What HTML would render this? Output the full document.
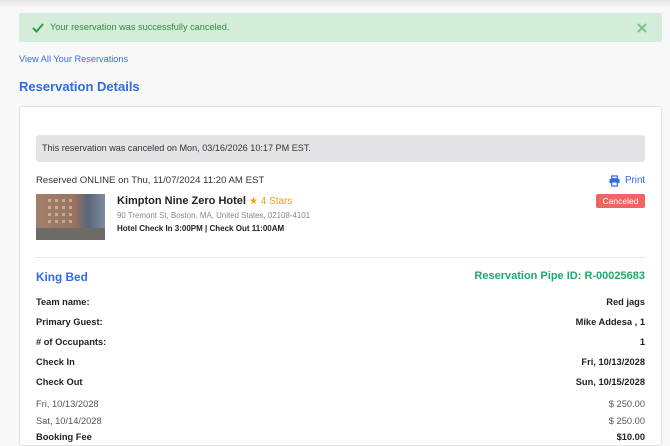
<!DOCTYPE html>
<html><head><meta charset="utf-8"><style>
*{margin:0;padding:0;box-sizing:border-box}
body{width:670px;height:436px;overflow:hidden;background:#f8f8f8;font-family:"Liberation Sans",sans-serif;position:relative;color:#222}
.a{position:absolute}
.topsh{left:0;top:0;width:670px;height:8px;background:linear-gradient(#e6e6e6,#f8f8f8)}
.alert{left:19px;top:13px;width:643px;height:29px;background:#d4edda;border-radius:2px;color:#2f8a3f;font-size:9.2px;line-height:29px;padding-left:31px}
.card{left:19px;top:106px;width:643px;height:340px;background:#fff;border:1px solid #e3e3e3;border-radius:3px}
.row{left:36px;width:609px;font-size:9.3px;display:flex;justify-content:space-between;line-height:14px}
</style></head><body>
<div class="a topsh"></div>
<div class="a alert">Your reservation was successfully canceled.</div>
<svg class="a" style="left:32px;top:22px" width="12" height="11" viewBox="0 0 12 11"><path d="M1 6l3.5 3.5L11 2" stroke="#2f9a45" stroke-width="2" fill="none"/></svg>
<svg class="a" style="left:637px;top:23px" width="10" height="10" viewBox="0 0 10 10"><path d="M1 1l8 8M9 1l-8 8" stroke="#7cc08c" stroke-width="2"/></svg>
<div class="a" style="left:19px;top:54px;font-size:9.2px;color:#3b6fe0">View All Your Reservations</div>
<div class="a" style="left:19px;top:79px;font-size:13px;font-weight:bold;color:#2e6be6">Reservation Details</div>
<div class="a card"></div>
<div class="a" style="left:36px;top:135px;width:609px;height:27px;background:#e4e4e6;border-radius:3px;font-size:9.1px;line-height:27px;padding-left:6px;color:#333">This reservation was canceled on Mon, 03/16/2026 10:17 PM EST.</div>
<div class="a" style="left:36px;top:175px;font-size:9.6px;color:#333">Reserved ONLINE on Thu, 11/07/2024 11:20 AM EST</div>
<svg class="a" style="left:609px;top:175px" width="11" height="12" viewBox="0 0 12 12"><rect x="3" y="0.5" width="6" height="3" fill="none" stroke="#2e6be6" stroke-width="1.3"/><rect x="0.5" y="3.5" width="11" height="5" rx="1" fill="#2e6be6"/><rect x="3" y="7" width="6" height="4.5" fill="#fff" stroke="#2e6be6" stroke-width="1.3"/></svg>
<div class="a" style="left:625px;top:175px;font-size:9.8px;color:#2e6be6">Print</div>
<div class="a" style="left:596px;top:194px;width:49px;height:14px;background:#ef6464;border-radius:2px;color:#fff;font-size:8.5px;line-height:14px;text-align:center">Canceled</div>
<div class="a" style="left:36px;top:194px;width:69px;height:46px;background:linear-gradient(90deg,#a2806a 0%,#9a7460 55%,#5a6578 75%,#7d8da0 100%)"></div>
<svg class="a" style="left:36px;top:194px" width="69" height="46"><g fill="#d8d0c4" opacity=".6"><rect x="12" y="5" width="3" height="3"/><rect x="19" y="5" width="3" height="3"/><rect x="26" y="5" width="3" height="3"/><rect x="33" y="5" width="3" height="3"/><rect x="12" y="12" width="3" height="3"/><rect x="19" y="12" width="3" height="3"/><rect x="26" y="12" width="3" height="3"/><rect x="33" y="12" width="3" height="3"/><rect x="12" y="19" width="3" height="3"/><rect x="19" y="19" width="3" height="3"/><rect x="26" y="19" width="3" height="3"/><rect x="33" y="19" width="3" height="3"/><rect x="12" y="26" width="3" height="3"/><rect x="19" y="26" width="3" height="3"/><rect x="26" y="26" width="3" height="3"/><rect x="33" y="26" width="3" height="3"/></g><rect x="0" y="34" width="69" height="12" fill="#6e6a66"/></svg>
<div class="a" style="left:117px;top:195px;font-size:11px;font-weight:bold;color:#222">Kimpton Nine Zero Hotel <span style="color:#f39c12;font-weight:normal;font-size:10px">★ 4 Stars</span></div>
<div class="a" style="left:117px;top:211px;font-size:7.9px;color:#888">90 Tremont St, Boston, MA, United States, 02108-4101</div>
<div class="a" style="left:117px;top:224px;font-size:8px;font-weight:bold;color:#222">Hotel Check In 3:00PM | Check Out 11:00AM</div>
<div class="a" style="left:36px;top:257px;width:609px;height:1px;background:#e6e6e6"></div>
<div class="a" style="left:36px;top:270px;font-size:11.8px;font-weight:bold;color:#2e6be6">King Bed</div>
<div class="a" style="right:25px;top:270px;font-size:11px;font-weight:bold;color:#1eaa6a">Reservation Pipe ID: R-00025683</div>
<div class="a row" style="top:295px;font-weight:bold"><span>Team name:</span><span>Red jags</span></div>
<div class="a row" style="top:315px;font-weight:bold"><span>Primary Guest:</span><span>Mike Addesa , 1</span></div>
<div class="a row" style="top:335px;font-weight:bold"><span># of Occupants:</span><span>1</span></div>
<div class="a row" style="top:355px;font-weight:bold"><span>Check In</span><span>Fri, 10/13/2028</span></div>
<div class="a row" style="top:375px;font-weight:bold"><span>Check Out</span><span>Sun, 10/15/2028</span></div>
<div class="a row" style="top:397px;color:#555"><span>Fri, 10/13/2028</span><span>$ 250.00</span></div>
<div class="a row" style="top:414px;color:#555"><span>Sat, 10/14/2028</span><span>$ 250.00</span></div>
<div class="a row" style="top:430px;font-weight:bold"><span>Booking Fee</span><span>$10.00</span></div>
</body></html>
